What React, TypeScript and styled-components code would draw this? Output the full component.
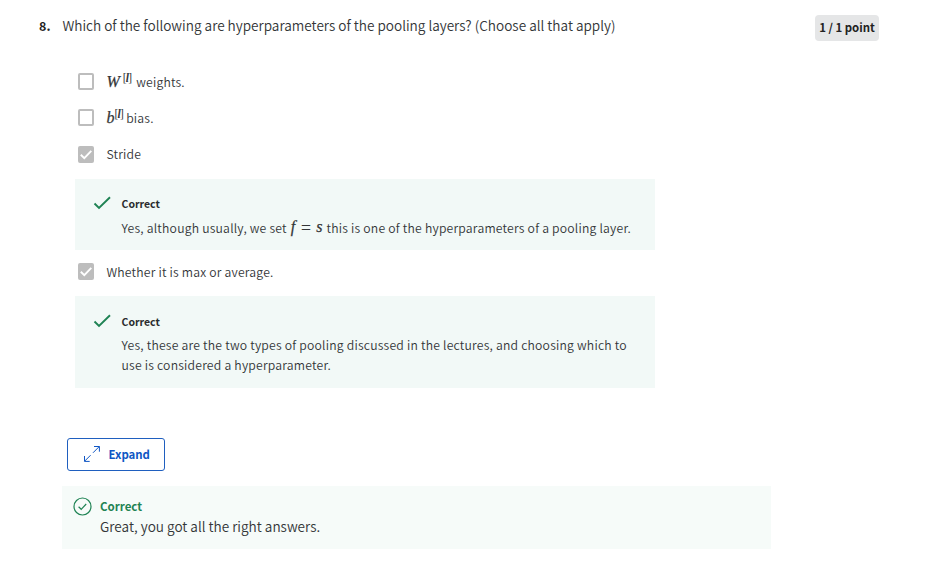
import React from 'react';
import styled, { createGlobalStyle } from 'styled-components';

const GlobalStyle = createGlobalStyle`
  * { box-sizing: border-box; }
  body { margin: 0; background: #fff; }
`;

const sourceFont = '"Noto Sans CJK SC", "Noto Sans", sans-serif';

const Page = styled.main`
  width: 925px;
  height: 568px;
  padding: 15px 46px 0 39px;
  font-family: ${sourceFont};
  font-size: 12.2px;
  font-weight: 350;
  color: #333638;
  white-space: nowrap;
`;

const Header = styled.header`
  display: flex;
  align-items: flex-start;
  height: 49px;
`;

const QuestionNumber = styled.span`
  width: 23.4px;
  font-size: 12.5px;
  font-weight: 700;
  line-height: 21px;
  color: #222;
`;

const QuestionText = styled.h1`
  flex: 1;
  margin: 0;
  font-size: 13.58px;
  font-weight: 350;
  line-height: 21px;
`;

const PointBadge = styled.span`
  width: 64px;
  height: 26px;
  border-radius: 4px;
  background: #e5e6e7;
  color: #222;
  font-size: 11.4px;
  font-weight: 700;
  line-height: 25px;
  text-align: center;
`;

const Options = styled.section`
  width: 580px;
  margin-left: 36px;
`;

const Option = styled.label<{ $raised?: boolean }>`
  display: flex;
  align-items: center;
  height: 36px;
  padding-left: 3px;
  padding-bottom: ${(p) => (p.$raised ? 1 : 0)}px;
  gap: 12.5px;
`;

const OptionText = styled.span`
  line-height: 20px;
  letter-spacing: 0.2px;
`;

const Box = styled.span<{ $checked?: boolean }>`
  display: flex;
  width: 16px;
  height: 17px;
  margin-bottom: ${(p) => (p.$checked ? 0 : 1)}px;
  border: 2px solid #bdbdbd;
  border-radius: 2px;
  background: ${(p) => (p.$checked ? '#bdbdbd' : '#fff')};

  svg { flex: none; margin: -2px; }
`;

const MathText = styled.i`
  font-family: "Liberation Serif", serif;
  font-size: 16px;
  font-weight: 400;
  line-height: 1;
  letter-spacing: 0;
  -webkit-text-stroke: 0.25px currentColor;
`;

const Equation = styled.span`
  display: inline-flex;
  gap: 4.5px;
  height: 16px;
  margin: 0 1px 0 1px;
  vertical-align: 1px;
  line-height: 16px;

  ${MathText}:nth-child(2) {
    font-size: 18px;
    -webkit-text-stroke: 0;
  }
`;

const Superscript = styled.sup<{ $wide?: boolean }>`
  margin-left: ${(p) => (p.$wide ? 3 : 0)}px;
  margin-right: ${(p) => (p.$wide ? 2 : 0.3)}px;
  font-family: "Liberation Serif", serif;
  font-size: 11.5px;
  font-weight: 400;
  line-height: 0;
  letter-spacing: -0.8px;
  vertical-align: 5px;

  i { font-weight: 700; }
`;

const Feedback = styled.div<{ $tall?: boolean }>`
  display: grid;
  grid-template-columns: 46.5px 1fr;
  height: ${(p) => (p.$tall ? 92 : 71)}px;
  margin: ${(p) => (p.$tall ? '6px 0 0' : '7px 0 4px')};
  padding-top: ${(p) => (p.$tall ? 16 : 15)}px;
  background: #f2f9f7;

  > svg { margin: 0 0 0 18px; }
`;

const FeedbackTitle = styled.h2<{ $tight?: boolean }>`
  margin: 0 0 ${(p) => (p.$tight ? 3 : 4)}px;
  font-size: 10.5px;
  font-weight: 700;
  line-height: 20px;
  color: #2a2c2e;
`;

const FeedbackText = styled.p`
  margin: 0;
  line-height: 20px;
  letter-spacing: 0.21px;
`;

const ExpandButton = styled.button`
  display: flex;
  align-items: center;
  width: 98px;
  height: 33px;
  margin: 50px 0 15px 28px;
  padding: 0 0 2px 14.5px;
  gap: 8px;
  border: 1px solid #1f5fbf;
  border-radius: 3px;
  background: #fff;
  color: #0f56c4;
  font: 700 11.4px/20px ${sourceFont};
`;

const ResultBanner = styled.div`
  display: grid;
  grid-template-columns: 38px 1fr;
  width: 709px;
  height: 63px;
  margin-left: 23px;
  padding-top: 10px;
  background: #f6fbf9;

  > svg { margin: 1px 0 0 11px; }
`;

const ResultTitle = styled.h2`
  margin: 0;
  font-size: 11.5px;
  font-weight: 700;
  line-height: 20px;
  color: #1f8354;
`;

const ResultText = styled.p`
  margin: 0;
  font-size: 13.58px;
  line-height: 21px;
`;

const CheckMark = () => (
  <svg width="19" height="18" viewBox="0 0 19 18" fill="none">
    <path d="M1.5 9.5 6 14 17 3.2" stroke="#1f8354" strokeWidth="1.9" />
  </svg>
);

const Checkbox = ({ checked }: { checked?: boolean }) => (
  <Box $checked={checked}>
    {checked && (
      <svg width="16" height="17" viewBox="0 0 16 17" fill="none">
        <path d="M2.8 8.7 6.3 12.1 13.3 4.8" stroke="#fff" strokeWidth="1.9" />
      </svg>
    )}
  </Box>
);

const Indexed = ({ symbol, wide }: { symbol: string; wide?: boolean }) => (
  <>
    <MathText>{symbol}</MathText>
    <Superscript $wide={wide}>[<i>l</i>]</Superscript>
  </>
);

export default function App() {
  return (
    <>
      <GlobalStyle />
      <Page>
        <Header>
          <QuestionNumber>8.</QuestionNumber>
          <QuestionText>
            Which of the following are hyperparameters of the pooling layers? (Choose all that apply)
          </QuestionText>
          <PointBadge>1 / 1 point</PointBadge>
        </Header>

        <Options>
          <Option>
            <Checkbox />
            <OptionText><Indexed symbol="W" wide /> weights.</OptionText>
          </Option>
          <Option>
            <Checkbox />
            <OptionText><Indexed symbol="b" /> bias.</OptionText>
          </Option>
          <Option>
            <Checkbox checked />
            <OptionText>Stride</OptionText>
          </Option>
          <Feedback>
            <CheckMark />
            <div>
              <FeedbackTitle>Correct</FeedbackTitle>
              <FeedbackText>
                Yes, although usually, we set{' '}
                <Equation>
                  <MathText>f</MathText>
                  <MathText>=</MathText>
                  <MathText>s</MathText>
                </Equation>{' '}
                this is one of the hyperparameters of a pooling layer.
              </FeedbackText>
            </div>
          </Feedback>
          <Option $raised>
            <Checkbox checked />
            <OptionText>Whether it is max or average.</OptionText>
          </Option>
          <Feedback $tall>
            <CheckMark />
            <div>
              <FeedbackTitle $tight>Correct</FeedbackTitle>
              <FeedbackText>
                Yes, these are the two types of pooling discussed in the lectures, and choosing which to
                <br />
                use is considered a hyperparameter.
              </FeedbackText>
            </div>
          </Feedback>
        </Options>

        <ExpandButton>
          <svg width="18" height="18" viewBox="0 0 18 18" fill="none" stroke="currentColor" strokeWidth="1">
            <path d="M10 7.8 16.2 1.6M11 1.5h5.4v5.2M7.6 10.2 1.6 16.2M1.5 11v5.4h5.2" />
          </svg>
          Expand
        </ExpandButton>

        <ResultBanner>
          <svg width="19" height="19" viewBox="0 0 19 19" fill="none" stroke="#1f8354">
            <circle cx="9.5" cy="9.5" r="8.5" strokeWidth="1.2" />
            <path d="M5.6 9.8 8.2 12.3 13.2 7" strokeWidth="1.2" />
          </svg>
          <div>
            <ResultTitle>Correct</ResultTitle>
            <ResultText>Great, you got all the right answers.</ResultText>
          </div>
        </ResultBanner>
      </Page>
    </>
  );
}
